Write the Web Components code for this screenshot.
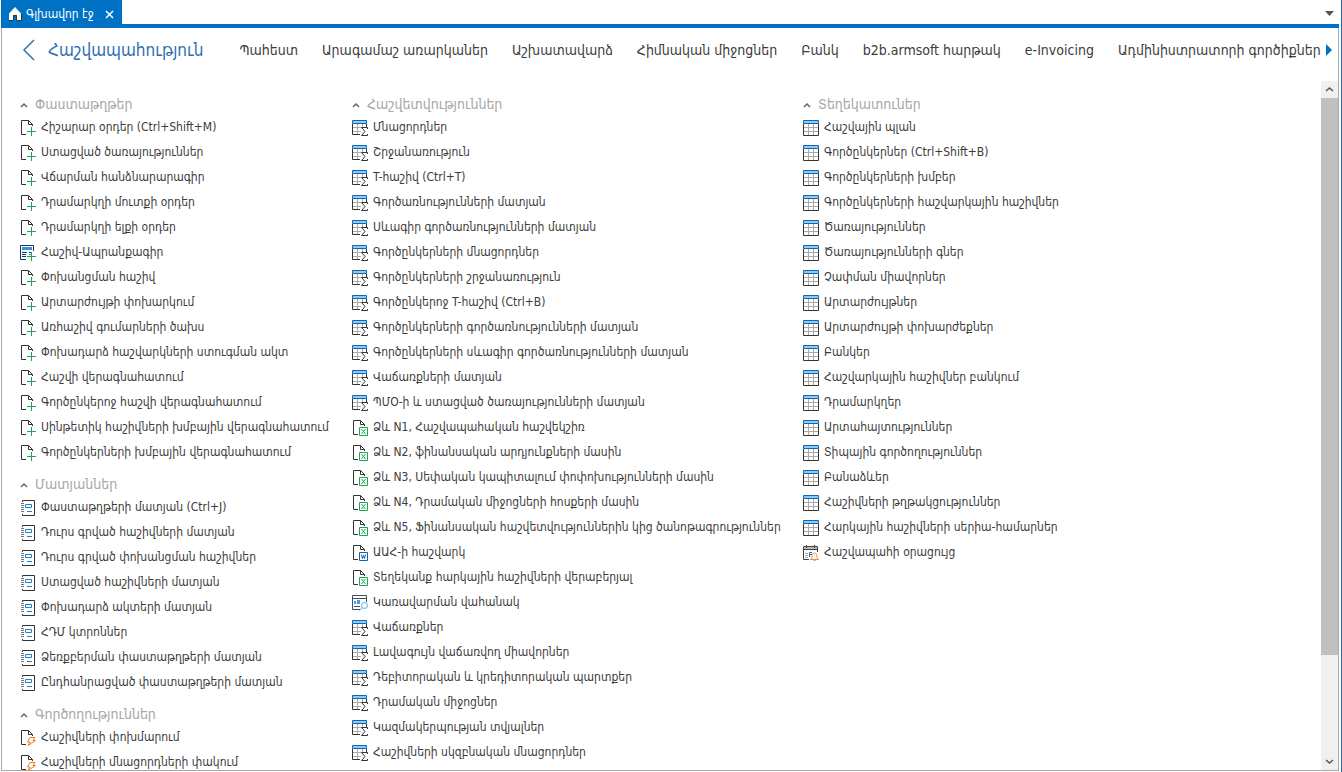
<!DOCTYPE html>
<html lang="hy">
<head>
<meta charset="utf-8">
<title>Գլխավոր էջ</title>
<style>
html, body { height: 100%; margin: 0; }
body {
  background: #fff;
  color: #3b3b3b;
  font: 12px/25px "DejaVu Sans Condensed", "DejaVu Sans", sans-serif;
  font-stretch: condensed;
  overflow: hidden;
}
</style>
</head>
<body>
<app-window>
  <page-tab slot="tabs">Գլխավոր էջ</page-tab>
  <module-bar slot="modules" heading="Հաշվապահություն">
    <module-link>Պահեստ</module-link>
    <module-link>Արագամաշ առարկաներ</module-link>
    <module-link>Աշխատավարձ</module-link>
    <module-link>Հիմնական միջոցներ</module-link>
    <module-link>Բանկ</module-link>
    <module-link>b2b.armsoft հարթակ</module-link>
    <module-link>e-Invoicing</module-link>
    <module-link>Ադմինիստրատորի գործիքներ</module-link>
  </module-bar>
  <menu-column>
    <menu-section heading="Փաստաթղթեր">
      <menu-entry icon="add">Հիշարար օրդեր (Ctrl+Shift+M)</menu-entry>
      <menu-entry icon="add">Ստացված ծառայություններ</menu-entry>
      <menu-entry icon="add">Վճարման հանձնարարագիր</menu-entry>
      <menu-entry icon="add">Դրամարկղի մուտքի օրդեր</menu-entry>
      <menu-entry icon="add">Դրամարկղի ելքի օրդեր</menu-entry>
      <menu-entry icon="invoice">Հաշիվ-Ապրանքագիր</menu-entry>
      <menu-entry icon="add">Փոխանցման հաշիվ</menu-entry>
      <menu-entry icon="add">Արտարժույթի փոխարկում</menu-entry>
      <menu-entry icon="add">Առհաշիվ գումարների ծախս</menu-entry>
      <menu-entry icon="add">Փոխադարձ հաշվարկների ստուգման ակտ</menu-entry>
      <menu-entry icon="add">Հաշվի վերագնահատում</menu-entry>
      <menu-entry icon="add">Գործընկերոջ հաշվի վերագնահատում</menu-entry>
      <menu-entry icon="add">Սինթետիկ հաշիվների խմբային վերագնահատում</menu-entry>
      <menu-entry icon="add">Գործընկերների խմբային վերագնահատում</menu-entry>
    </menu-section>
    <menu-section heading="Մատյաններ">
      <menu-entry icon="journal">Փաստաթղթերի մատյան (Ctrl+J)</menu-entry>
      <menu-entry icon="journal">Դուրս գրված հաշիվների մատյան</menu-entry>
      <menu-entry icon="journal">Դուրս գրված փոխանցման հաշիվներ</menu-entry>
      <menu-entry icon="journal">Ստացված հաշիվների մատյան</menu-entry>
      <menu-entry icon="journal">Փոխադարձ ակտերի մատյան</menu-entry>
      <menu-entry icon="journal">ՀԴՄ կտրոններ</menu-entry>
      <menu-entry icon="journal">Ձեռքբերման փաստաթղթերի մատյան</menu-entry>
      <menu-entry icon="journal">Ընդհանրացված փաստաթղթերի մատյան</menu-entry>
    </menu-section>
    <menu-section heading="Գործողություններ">
      <menu-entry icon="action">Հաշիվների փոխմարում</menu-entry>
      <menu-entry icon="action">Հաշիվների մնացորդների փակում</menu-entry>
    </menu-section>
  </menu-column>
  <menu-column>
    <menu-section heading="Հաշվետվություններ">
      <menu-entry icon="sum">Մնացորդներ</menu-entry>
      <menu-entry icon="sum">Շրջանառություն</menu-entry>
      <menu-entry icon="sum">T-հաշիվ (Ctrl+T)</menu-entry>
      <menu-entry icon="sum">Գործառնությունների մատյան</menu-entry>
      <menu-entry icon="sum">Սևագիր գործառնությունների մատյան</menu-entry>
      <menu-entry icon="sum">Գործընկերների մնացորդներ</menu-entry>
      <menu-entry icon="sum">Գործընկերների շրջանառություն</menu-entry>
      <menu-entry icon="sum">Գործընկերոջ T-հաշիվ (Ctrl+B)</menu-entry>
      <menu-entry icon="sum">Գործընկերների գործառնությունների մատյան</menu-entry>
      <menu-entry icon="sum">Գործընկերների սևագիր գործառնությունների մատյան</menu-entry>
      <menu-entry icon="sum">Վաճառքների մատյան</menu-entry>
      <menu-entry icon="sum">ՊՄՕ-ի և ստացված ծառայությունների մատյան</menu-entry>
      <menu-entry icon="excel">Ձև N1, Հաշվապահական հաշվեկշիռ</menu-entry>
      <menu-entry icon="excel">Ձև N2, ֆինանսական արդյունքների մասին</menu-entry>
      <menu-entry icon="excel">Ձև N3, Սեփական կապիտալում փոփոխությունների մասին</menu-entry>
      <menu-entry icon="excel">Ձև N4, Դրամական միջոցների հոսքերի մասին</menu-entry>
      <menu-entry icon="excel">Ձև N5, Ֆինանսական հաշվետվություններին կից ծանոթագրություններ</menu-entry>
      <menu-entry icon="word">ԱԱՀ-ի հաշվարկ</menu-entry>
      <menu-entry icon="excel">Տեղեկանք հարկային հաշիվների վերաբերյալ</menu-entry>
      <menu-entry icon="dashboard">Կառավարման վահանակ</menu-entry>
      <menu-entry icon="sum">Վաճառքներ</menu-entry>
      <menu-entry icon="sum">Լավագույն վաճառվող միավորներ</menu-entry>
      <menu-entry icon="sum">Դեբիտորական և կրեդիտորական պարտքեր</menu-entry>
      <menu-entry icon="sum">Դրամական միջոցներ</menu-entry>
      <menu-entry icon="sum">Կազմակերպության տվյալներ</menu-entry>
      <menu-entry icon="sum">Հաշիվների սկզբնական մնացորդներ</menu-entry>
    </menu-section>
  </menu-column>
  <menu-column>
    <menu-section heading="Տեղեկատուներ">
      <menu-entry icon="table">Հաշվային պլան</menu-entry>
      <menu-entry icon="table">Գործընկերներ (Ctrl+Shift+B)</menu-entry>
      <menu-entry icon="table">Գործընկերների խմբեր</menu-entry>
      <menu-entry icon="table">Գործընկերների հաշվարկային հաշիվներ</menu-entry>
      <menu-entry icon="table">Ծառայություններ</menu-entry>
      <menu-entry icon="table">Ծառայությունների գներ</menu-entry>
      <menu-entry icon="table">Չափման միավորներ</menu-entry>
      <menu-entry icon="table">Արտարժույթներ</menu-entry>
      <menu-entry icon="table">Արտարժույթի փոխարժեքներ</menu-entry>
      <menu-entry icon="table">Բանկեր</menu-entry>
      <menu-entry icon="table">Հաշվարկային հաշիվներ բանկում</menu-entry>
      <menu-entry icon="table">Դրամարկղեր</menu-entry>
      <menu-entry icon="table">Արտահայտություններ</menu-entry>
      <menu-entry icon="table">Տիպային գործողություններ</menu-entry>
      <menu-entry icon="table">Բանաձևեր</menu-entry>
      <menu-entry icon="table">Հաշիվների թղթակցություններ</menu-entry>
      <menu-entry icon="table">Հարկային հաշիվների սերիա-համարներ</menu-entry>
      <menu-entry icon="calendar">Հաշվապահի օրացույց</menu-entry>
    </menu-section>
  </menu-column>
</app-window>

<script>
const define = (name, css, html) => customElements.define(name, class extends HTMLElement {
  connectedCallback() {
    if (this.shadowRoot) return;
    const root = this.attachShadow({ mode: 'open' });
    const template = document.createElement('template');
    template.innerHTML = `<style>*{box-sizing:border-box}button{font:inherit;color:inherit;background:none;border:0;padding:0;margin:0}svg{display:block;fill:none}${css}</style>${typeof html === 'function' ? html(this) : html}`;
    root.append(template.content.cloneNode(true));
  }
});

const sheet = '<path d="M6 15.5H1.5V1.5H8.5L12.5 5.5V7M8.5 1.5V5.5H12.5" stroke="#333"/>';
const plus = '<path d="M7 12.5H16M11.5 8V17" stroke="#1ca651"/>';
const tableHead = w => `<path d="M.5 1.5H${w}V4.5H.5Z" fill="#90caf0" stroke="#0e66b4"/>`;
const ICONS = {
  add: sheet + plus,
  action: sheet + '<path d="M10 8.5H15L13 11.5H15.5L8 16.5L10 13H7.5Z" stroke="#f07d1e"/>',
  excel: sheet + '<path d="M7.5 8.5H15.5V16.5H7.5Z" fill="#fff" stroke="#1ca651"/><path d="M9.5 10L13.5 15M13.5 10L9.5 15" stroke="#1ca651"/>',
  word: sheet + '<path d="M7.5 8.5H15.5V16.5H7.5Z" fill="#fff" stroke="#1263ae"/><path d="M9.5 10.5L10.5 14.5L11.5 11.5L12.5 14.5L13.5 10.5" stroke="#1263ae"/>',
  invoice: '<path d="M6 15.5H.5V1.5H13.5V7" stroke="#12385f"/><path d="M2 3H12V6H2Z" fill="#3494e0"/><path d="M2 8.5H7M2 10.5H6M2 12.5H6M9 8.5H11" stroke="#12385f"/><path d="M9 10.5H11" stroke="#3494e0"/>' + plus,
  journal: '<path d="M2.5 3V1.5H14.5V16.5H2.5V15" stroke="#333"/><path d="M1 4.5H4M1 6.5H4M1 8.5H4M1 10.5H4M1 12.5H4" stroke="#777"/><path d="M5.5 5.5H11.5V8.5H5.5ZM7 12.5H12" stroke="#1f82cc"/>',
  sum: '<path d="M5.5 5V15M10.5 5V9M1 8.5H9M1 12.5H9" stroke="#aaa"/><path d="M.5 5V15.5H8M14.5 5V8" stroke="#333"/>' + tableHead(14.5) + '<path d="M15.5 10V8.5H9.5L13 12.5L9.5 16.5H15.5V15" stroke="#333"/>',
  table: '<path d="M5.5 5V16M10.5 5V16M1 8.5H15M1 12.5H15" stroke="#aaa"/><path d="M.5 5V16.5H15.5V5" stroke="#333"/>' + tableHead(15.5),
  dashboard: '<path d="M8 15.5H.5V1.5H14.5V8M1 4.5H14" stroke="#3e4f66"/><path d="M2 7H4V10H2ZM5 6H8V10H5Z" fill="#3ba0dc"/><path d="M2 12.5H8" stroke="#3e4f66"/><circle cx="12.5" cy="11.5" r="3" stroke="#55b1e2"/><path d="M10.5 13.5L7.5 16.5" stroke="#55b1e2"/>',
  calendar: '<path d="M1 3H14V5H1Z" fill="#bbb"/><path d="M6 15.5H.5V2.5H14.5V8M1 5.5H14M3.5 1V4M11.5 1V4" stroke="#444"/><path d="M2 9.5H5M2 11.5H5M2 13.5H5" stroke="#aaa"/><path d="M9 8.5H6.5V13M7 10.5H9" stroke="#2a6da8"/><path d="M7.5 15.5H15.5L14 13.5Q14 9 11.5 9Q9 9 9 13.5ZM10.5 16.5H12.5" fill="#fff" stroke="#f08a3c"/>',
  home: '<path d="M8 1L2 7.5V14H6V9H10V14H14V7.5Z" fill="#fff"/><path d="M6.5 14V9.5H9.5V14M14.5 8V14.5H10M2 14.5H6" stroke="#333"/>'
};

define('line-icon', ':host{display:block;flex:none;width:17px;height:17px}',
  el => `<svg width="17" height="17" viewBox="0 0 17 17" aria-hidden="true">${ICONS[el.getAttribute('name')]}</svg>`);

define('page-tab', `
  :host{display:flex;align-items:center;height:28px;padding:0 8px 0 6px;background:#0072c6;color:#fff}
  .page{display:flex;align-items:center;gap:2px}
  .close{margin-left:11px}`,
  `<button class="page"><line-icon name="home"></line-icon><slot></slot></button>
   <button class="close" aria-label="Փակել"><svg width="9" height="9"><path d="M1 1L8 8M8 1L1 8" stroke="#fff" stroke-width="1.5"/></svg></button>`);

define('module-link', `
  :host{display:block;flex:none}
  a{color:inherit;text-decoration:none;white-space:nowrap}`,
  '<a href="#"><slot></slot></a>');

define('module-bar', `
  :host{display:flex;align-items:center;height:44px;padding:0 6px 0 20px}
  .back{width:13px;margin-right:13px}
  h1{flex:none;margin:0;color:#2e6fb2;font-size:17px;font-weight:400}
  nav{display:flex;flex:1;min-width:0;gap:24px;margin-left:36px;font-size:14px;overflow:hidden}
  .more{margin-left:2px}`,
  el => `<button class="back" aria-label="Հետ"><svg width="13" height="22"><path d="M12 1L2 11L12 21" stroke="#2e75b8" stroke-width="1.5"/></svg></button>
   <h1>${el.getAttribute('heading')}</h1><nav><slot></slot></nav>
   <button class="more" aria-label="Ավելին"><svg width="6" height="12"><path d="M0 0L6 6L0 12Z" fill="#0072c6"/></svg></button>`);

define('menu-column', ':host{display:flex;flex-direction:column;gap:9px;min-width:0}', '<slot></slot>');

define('menu-section', `
  :host{display:block}
  h2{margin:0;font:inherit}
  button{display:flex;align-items:center;height:21px;gap:7px;color:#a6a6a6;font-size:14px;line-height:21px}`,
  el => `<h2><button aria-expanded="true"><svg width="8" height="6"><path d="M1 5L4 2L7 5" stroke="#666" stroke-width="1.5"/></svg>${el.getAttribute('heading')}</button></h2>
   <div role="list"><slot></slot></div>`);

define('menu-entry', `
  :host{display:block}
  a{display:flex;align-items:center;width:max-content;height:25px;gap:4px;color:inherit;text-decoration:none;white-space:nowrap}`,
  el => `<a href="#"><line-icon name="${el.getAttribute('icon')}"></line-icon><span><slot></slot></span></a>`);

define('scroll-rail', `
  :host{display:flex;flex-direction:column;flex:none;width:17px;background:#f0f0f0}
  button{display:grid;place-items:center;flex:none;height:17px}
  .track{flex:1}
  .thumb{height:85%;background:#c0c0c0}`,
  `<button aria-label="Վերև"><svg width="9" height="7"><path d="M1 5L4.5 2L8 5" stroke="#555" stroke-width="1.5"/></svg></button>
   <div class="track"><div class="thumb"></div></div>
   <button aria-label="Ներքև"><svg width="9" height="7"><path d="M1 2L4.5 5L8 2" stroke="#555" stroke-width="1.5"/></svg></button>`);

define('app-window', `
  :host{display:flex;flex-direction:column;height:100vh;box-sizing:border-box;padding:0 2px 1px 1px;border-right:1px solid #1b6dbc}
  header{display:flex;justify-content:space-between;align-items:flex-start;flex:none;height:28px;background:linear-gradient(#fff 24px,#0072c6 24px)}
  .list{padding:11px 5px}
  main{display:flex;flex-direction:column;flex:1;min-height:0;border:solid #a9a9a9;border-width:0 1px 1px}
  .body{display:flex;flex:1;min-height:0;margin-top:9px}
  .menu{flex:1;min-width:0;overflow:hidden;display:grid;grid-template-columns:332px 451px minmax(0,1fr);align-items:start;padding:13px 0 0 18px}`,
  `<header><slot name="tabs"></slot><button class="list" aria-label="Էջերի ցանկ"><svg width="9" height="5"><path d="M0 0H9L4.5 5Z" fill="#555"/></svg></button></header>
   <main><slot name="modules"></slot>
     <div class="body"><div class="menu"><slot></slot></div><scroll-rail></scroll-rail></div>
   </main>`);
</script>
</body>
</html>
